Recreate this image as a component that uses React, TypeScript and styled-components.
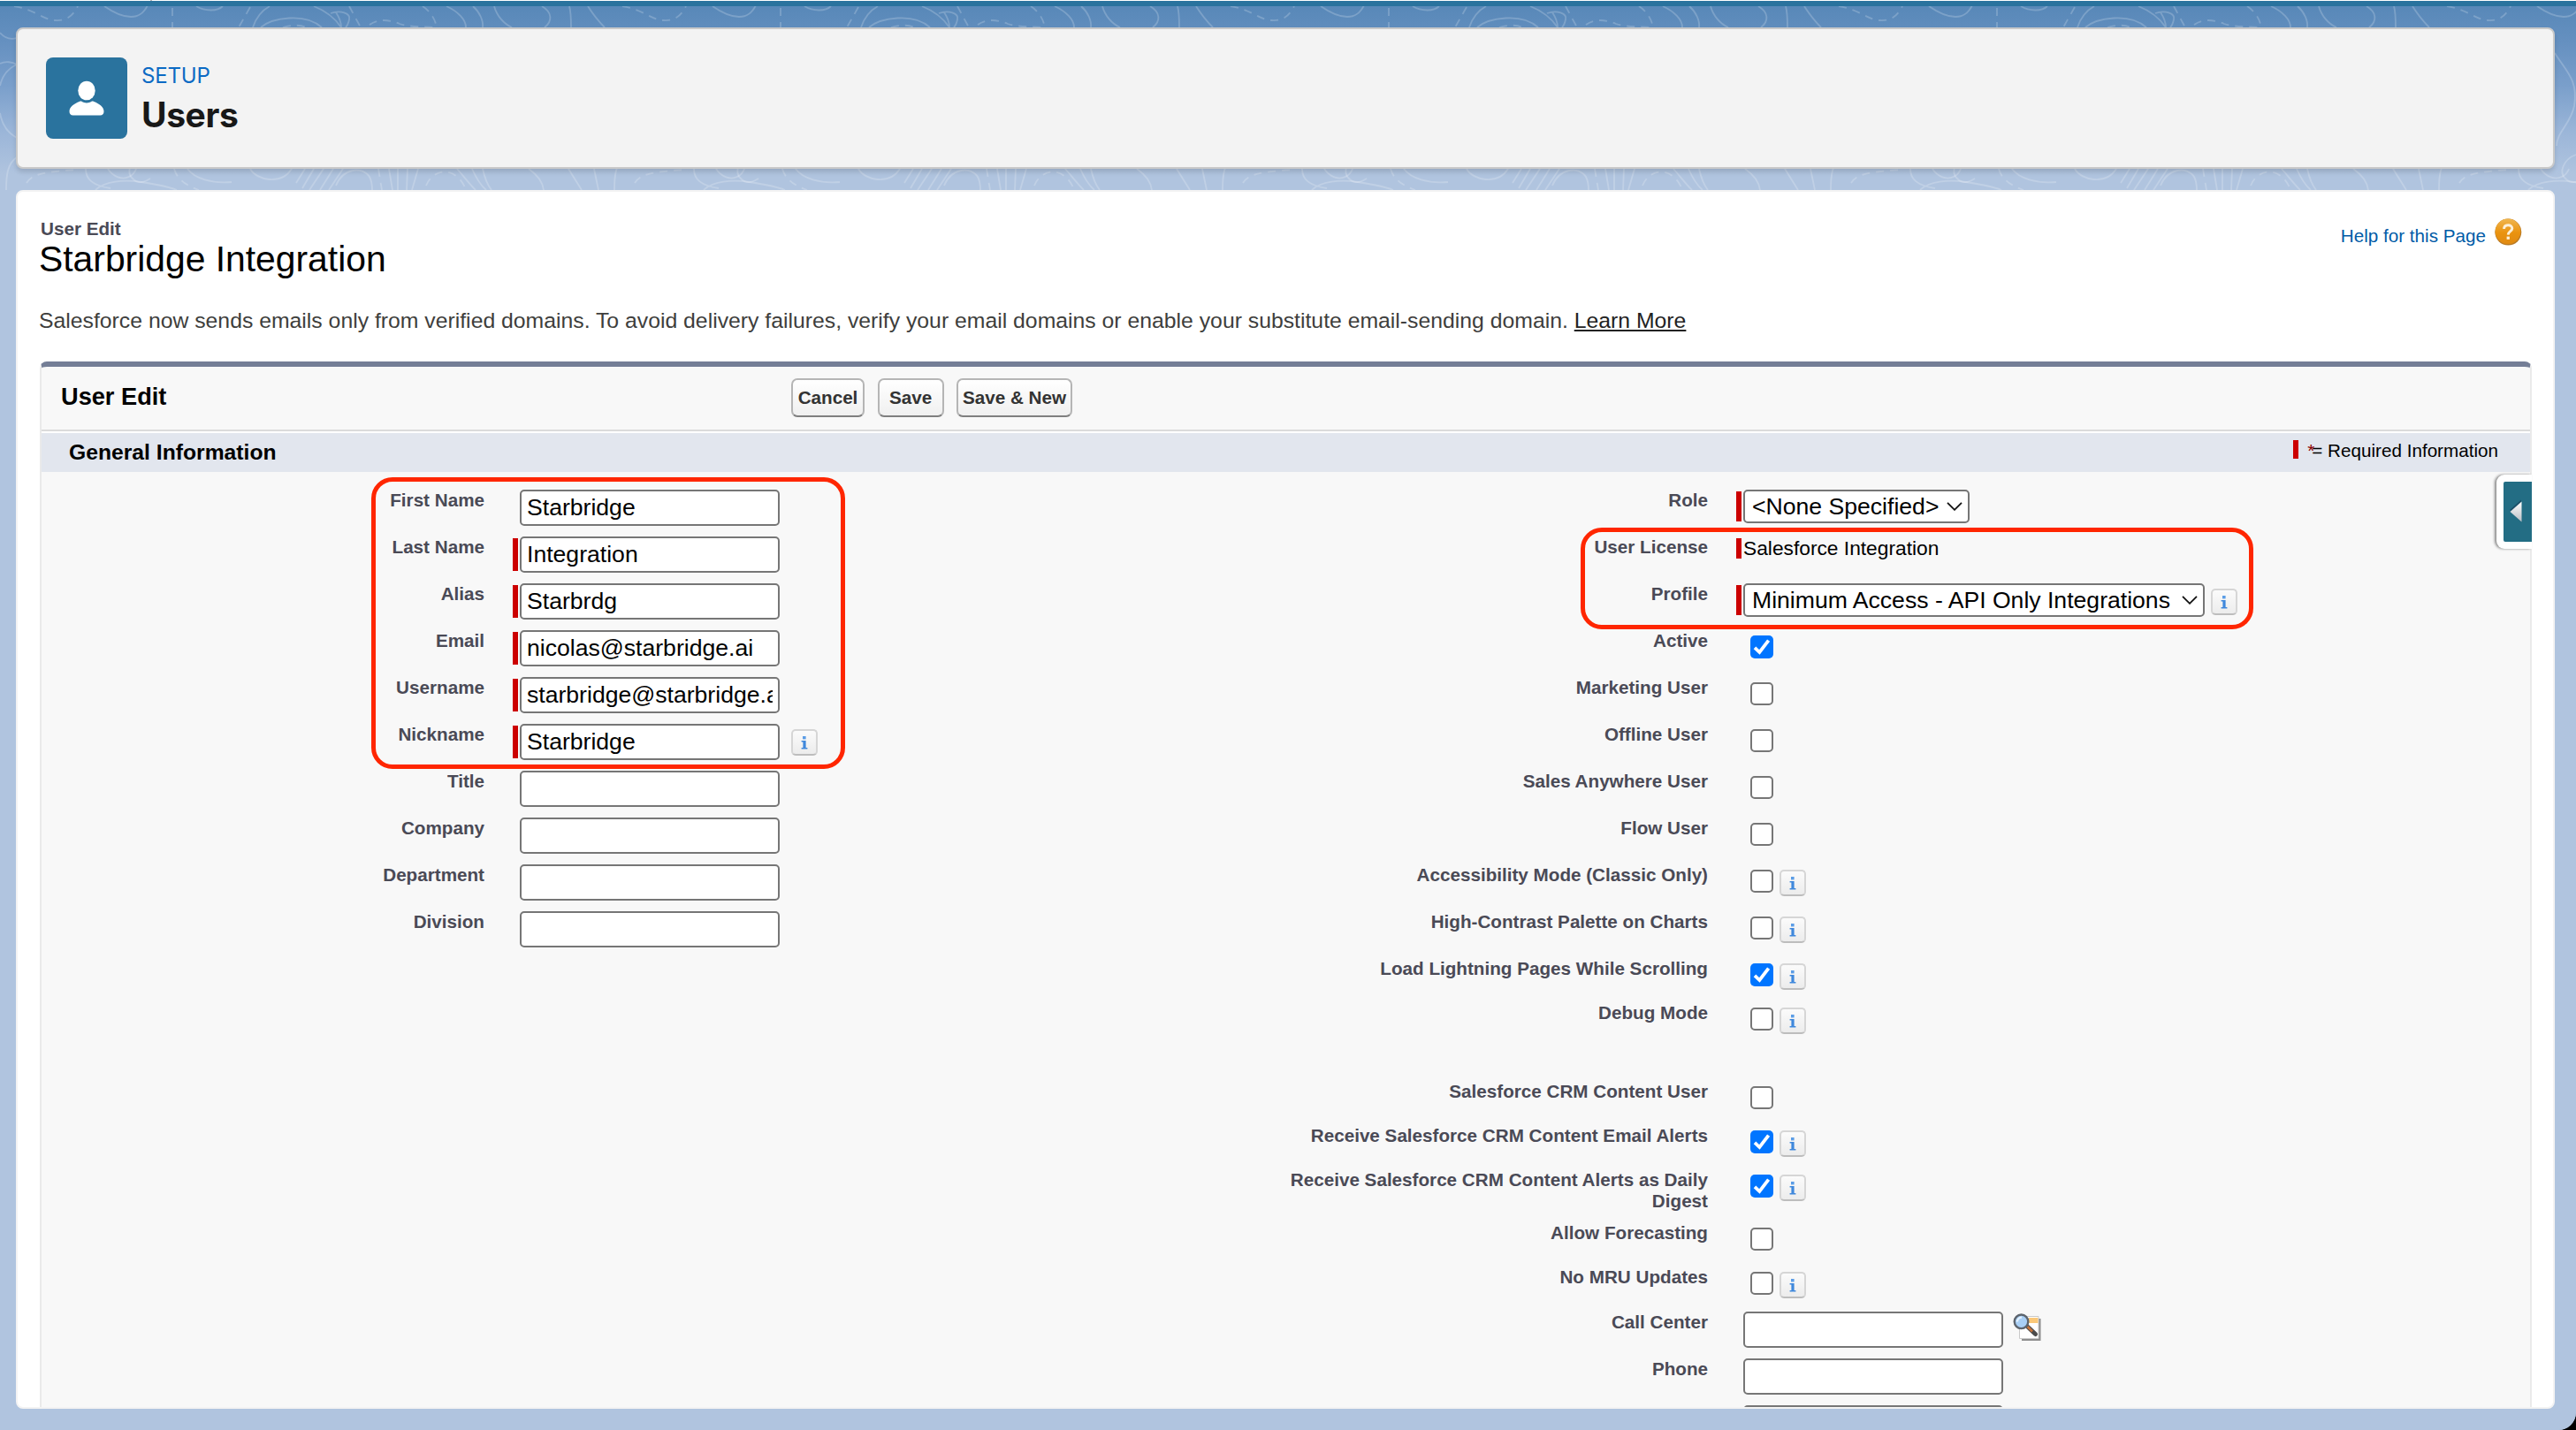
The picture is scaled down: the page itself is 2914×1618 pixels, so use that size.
import React from 'react';
import styled, { createGlobalStyle } from 'styled-components';

interface IField {
  label: string;
  type: 'text' | 'select' | 'checkbox' | 'static';
  value?: string;
  required?: boolean;
  checked?: boolean;
  info?: boolean;
  lookup?: boolean;
  width?: number;
  height?: number;
}

const leftFields: IField[] = [
  { label: 'First Name', type: 'text', value: 'Starbridge' },
  { label: 'Last Name', type: 'text', value: 'Integration', required: true },
  { label: 'Alias', type: 'text', value: 'Starbrdg', required: true },
  { label: 'Email', type: 'text', value: 'nicolas@starbridge.ai', required: true },
  { label: 'Username', type: 'text', value: 'starbridge@starbridge.ai', required: true },
  { label: 'Nickname', type: 'text', value: 'Starbridge', required: true, info: true },
  { label: 'Title', type: 'text' },
  { label: 'Company', type: 'text' },
  { label: 'Department', type: 'text' },
  { label: 'Division', type: 'text' },
];

const rightFields: IField[] = [
  { label: 'Role', type: 'select', value: '<None Specified>', required: true, width: 256 },
  { label: 'User License', type: 'static', value: 'Salesforce Integration', required: true },
  {
    label: 'Profile',
    type: 'select',
    value: 'Minimum Access - API Only Integrations',
    required: true,
    info: true,
    width: 522,
  },
  { label: 'Active', type: 'checkbox', checked: true },
  { label: 'Marketing User', type: 'checkbox' },
  { label: 'Offline User', type: 'checkbox' },
  { label: 'Sales Anywhere User', type: 'checkbox' },
  { label: 'Flow User', type: 'checkbox' },
  { label: 'Accessibility Mode (Classic Only)', type: 'checkbox', info: true },
  { label: 'High-Contrast Palette on Charts', type: 'checkbox', info: true },
  {
    label: 'Load Lightning Pages While Scrolling',
    type: 'checkbox',
    checked: true,
    info: true,
    height: 50,
  },
  { label: 'Debug Mode', type: 'checkbox', info: true, height: 89 },
  { label: 'Salesforce CRM Content User', type: 'checkbox', height: 50 },
  {
    label: 'Receive Salesforce CRM Content Email Alerts',
    type: 'checkbox',
    checked: true,
    info: true,
    height: 50,
  },
  {
    label: 'Receive Salesforce CRM Content Alerts as Daily Digest',
    type: 'checkbox',
    checked: true,
    info: true,
    height: 60,
  },
  { label: 'Allow Forecasting', type: 'checkbox', height: 50 },
  { label: 'No MRU Updates', type: 'checkbox', info: true, height: 51 },
  { label: 'Call Center', type: 'text', lookup: true },
  { label: 'Phone', type: 'text' },
  { label: '', type: 'text' },
];

const barHeights = { text: 37, select: 34, static: 23, checkbox: 0 };

// contour lines of the header background, one 688px wide tile
const Contours = () => (
  <ContourSvg width='100%' height='215'>
    <defs>
      <pattern id='contours' width='688' height='215' patternUnits='userSpaceOnUse'>
        <g fill='none' stroke='#fff' strokeOpacity='0.2' strokeWidth='1.8'>
          <path d='M0 37C5 43 12 45 19 43M118 7C128 14 138 19 148 19C158 19 163 14 167 6M222 7C232 13 246 13 252 7' />
          <path d='M286 31C290 19 296 12 305 7M355 7C370 13 380 22 386 31M295 31C308 20 345 14 364 31M374 15C385 11 397 15 395 22C394 27 393 29 391 31M380 14C384 20 386 26 386 31' />
          <path d='M505 7C518 13 527 22 527 31M535 7C543 14 547 24 546 31M559 7C562 18 570 27 579 31M613 7C625 14 625 24 616 31M644 7C646 14 646 24 646 31M665 7C672 18 678 25 684 31' />
          <path d='M0 72C6 69 14 70 19 73C8 78 2 88 0 97M0 128C2 140 8 150 19 156M19 178C8 185 7 200 7 215' />
          <path d='M138 60C150 80 165 90 160 120C156 140 140 150 140 165M162 175C148 180 142 195 150 202C156 208 162 207 170 202' />
          <path d='M97 191C97 203 105 210 125 213M122 191C128 200 138 204 146 200C150 198 153 194 154 191M108 215C118 205 140 203 160 206C180 209 195 213 200 215' />
          <path d='M212 191C220 202 240 208 262 206M283 191C290 204 318 210 330 191M345 191L335 207M355 191L342 213M366 191L350 215M377 191L362 215M388 191L372 215' />
          <path d='M380 210C388 190 410 188 418 200C421 206 421 212 421 215M440 191L444 215M450 191V215M461 191L460 215M473 191L466 215' />
          <path d='M517 191C525 200 530 207 538 215M534 191C538 200 543 209 550 215M546 191C548 200 552 210 556 215M598 191C608 198 614 206 615 215M643 191L658 215M672 191L677 215' />
          <path
            strokeDasharray='9 7'
            d='M16 7C40 11 48 22 62 23C74 24 82 19 88 7M195 9V31M283 8L270 31M395 7L408 31M418 28C428 21 440 22 452 27C464 31 480 30 490 31M478 7C486 12 491 20 493 27M320 31C330 28 340 28 346 31'
          />
          <path
            strokeDasharray='9 7'
            d='M30 207C36 197 50 194 90 192M197 191C200 202 210 210 225 215M428 191L432 215M482 210C490 190 515 188 526 212'
          />
        </g>
      </pattern>
    </defs>
    <rect width='100%' height='215' fill='url(#contours)' />
  </ContourSvg>
);

const UserIcon = () => (
  <svg width='92' height='92' viewBox='0 0 92 92'>
    <ellipse cx='46' cy='37.5' rx='9.7' ry='10.8' fill='#fff' />
    <path
      d='M38.2 49.7C39 49.3 39.8 49.4 40.4 49.8C43.8 52 48.2 52 51.6 49.8C52.2 49.4 53 49.3 53.8 49.7C60.5 52.4 65.5 56 65.5 61C65.5 63.8 64 65.5 61.3 65.5H30.7C28 65.5 26.5 63.8 26.5 61C26.5 56 31.5 52.4 38.2 49.7Z'
      fill='#fff'
    />
  </svg>
);

const HelpIcon = () => (
  <svg width='31' height='31' viewBox='0 0 31 31'>
    <defs>
      <linearGradient id='help' x1='0' y1='0' x2='0' y2='1'>
        <stop offset='0' stopColor='#f0b650' />
        <stop offset='0.55' stopColor='#ea930f' />
        <stop offset='1' stopColor='#e08a12' />
      </linearGradient>
    </defs>
    <circle cx='15.3' cy='15.6' r='15' fill='#b87a24' />
    <circle cx='15' cy='14.8' r='14.3' fill='url(#help)' />
    <path
      d='M10.6 12C10.6 9 12.6 7.8 15.2 7.8C18 7.8 19.8 9.4 19.8 11.6C19.8 14.6 15.4 14.8 15.2 18.6'
      fill='none'
      stroke='#fdf0d8'
      strokeWidth='2.9'
    />
    <rect x='13.6' y='20.6' width='3.3' height='3.3' fill='#fdf0d8' />
  </svg>
);

const InfoIcon = () => (
  <InfoBox>
    <svg width='8' height='15' viewBox='0 0 8 15'>
      <rect x='2' y='0' width='3.6' height='3.4' fill='#5b9de6' />
      <path d='M0.6 5H5.6V13H7.4V14.6H0.6V13H2.4V6.6H0.6Z' fill='#3f88dc' />
    </svg>
  </InfoBox>
);

const LookupIcon = () => (
  <LookupSvg width='34' height='32' viewBox='0 0 34 32'>
    <path d='M10 6H31.5V31H10Z' fill='#8e8e8e' />
    <path d='M7.5 3.5H29V28.5H7.5Z' fill='#fff' stroke='#c9c9c9' />
    <rect x='18' y='5' width='10.5' height='6' fill='#fbc878' />
    <path d='M17 15.5L25.5 23.5' stroke='#4c4c4c' strokeWidth='5' strokeLinecap='round' />
    <path d='M16.5 15L22 20.5' stroke='#c8733a' strokeWidth='2.6' />
    <circle cx='9.5' cy='9.3' r='7.8' fill='#a9cff5' stroke='#5d646d' strokeWidth='2.4' />
    <path d='M5 9.5C5 6.5 7 4.6 10 4.6' fill='none' stroke='#e4f2ff' strokeWidth='2.2' />
  </LookupSvg>
);

const Checkbox = ({ checked }: { checked?: boolean }) => (
  <CheckboxBox role='checkbox' aria-checked={!!checked} $checked={checked}>
    {checked && (
      <svg width='26' height='26' viewBox='0 0 26 26'>
        <path d='M5 13.8L10.4 19L20.6 5.6' fill='none' stroke='#fff' strokeWidth='3.8' />
      </svg>
    )}
  </CheckboxBox>
);

const FieldRow = ({ field }: { field: IField }) => {
  const { label, type, value, required, checked, info, lookup, width, height } = field;

  return (
    <Row $height={height}>
      <Label>{label}</Label>
      <RequiredBar $on={required} $height={barHeights[type]} />
      {type === 'text' && <TextInput type='text' defaultValue={value} />}
      {type === 'static' && <StaticText>{value}</StaticText>}
      {type === 'checkbox' && <Checkbox checked={checked} />}
      {type === 'select' && (
        <SelectBox $width={width}>
          {value}
          <svg width='18' height='10' viewBox='0 0 18 10'>
            <path d='M1 0.8L9 8.8L17 0.8' fill='none' stroke='#111' strokeWidth='1.8' />
          </svg>
        </SelectBox>
      )}
      {info && (
        <InfoCont $wide={type === 'text'}>
          <InfoIcon />
        </InfoCont>
      )}
      {lookup && <LookupIcon />}
    </Row>
  );
};

const App = () => {
  return (
    <>
      <GlobalStyle />
      <Page>
        <TabStrip />
        <BrandBar />
        <Content>
          <Contours />
          <PageHeader>
            <HeaderIcon>
              <UserIcon />
            </HeaderIcon>
            <HeaderText>
              <Setup>SETUP</Setup>
              <HeaderTitle>Users</HeaderTitle>
            </HeaderText>
          </PageHeader>
          <Card>
            <TitleCont>
              <div>
                <PageType>User Edit</PageType>
                <PageDescription>Starbridge Integration</PageDescription>
              </div>
              <HelpLink>
                <span>Help for this Page</span>
                <HelpIcon />
              </HelpLink>
            </TitleCont>
            <Message>
              Salesforce now sends emails only from verified domains. To avoid delivery failures,
              verify your email domains or enable your substitute email-sending domain.{' '}
              <LearnMore>Learn More</LearnMore>
            </Message>
            <Block>
              <BlockHeader>
                <BlockTitle>User Edit</BlockTitle>
                <Button $width={83}>Cancel</Button>
                <Button $width={75}>Save</Button>
                <Button $width={131}>Save &amp; New</Button>
              </BlockHeader>
              <SectionBar>
                <SectionTitle>General Information</SectionTitle>
                <Legend>
                  <LegendBar />
                  <Asterisk>*</Asterisk>= Required Information
                </Legend>
              </SectionBar>
              <BlockBody>
                <LeftColumn>
                  {leftFields.map((field) => (
                    <FieldRow key={field.label} field={field} />
                  ))}
                </LeftColumn>
                <RightColumn>
                  {rightFields.map((field) => (
                    <FieldRow key={field.label} field={field} />
                  ))}
                </RightColumn>
                <NameHighlight />
                <ProfileHighlight />
                <SideTab>
                  <SideTabButton>
                    <svg width='18' height='28' viewBox='0 0 18 28'>
                      <defs>
                        <linearGradient id='arrow' x1='0' y1='0' x2='0' y2='1'>
                          <stop offset='0' stopColor='#fff' />
                          <stop offset='1' stopColor='#b9bec4' />
                        </linearGradient>
                      </defs>
                      <path d='M14 0.5L1 12L14 23Z' fill='#1a4f68' />
                      <path d='M14.5 2.5L1.5 14L14.5 25.5Z' fill='url(#arrow)' />
                    </svg>
                  </SideTabButton>
                </SideTab>
              </BlockBody>
            </Block>
          </Card>
        </Content>
      </Page>
    </>
  );
};

export default App;

const GlobalStyle = createGlobalStyle`
  * {
    box-sizing: border-box;
  }
  body {
    margin: 0;
    background: #000;
    font-family: 'Liberation Sans', Arial, sans-serif;
  }
  svg {
    display: block;
  }
`;

const Page = styled.div`
  display: flex;
  flex-direction: column;
  height: 100vh;
  overflow: hidden;
  background: #b0c4df;
  border-bottom-right-radius: 20px;
`;

const TabStrip = styled.div`
  flex: none;
  height: 1px;
  background: linear-gradient(90deg, #fff 170px, #b5b5b5 170px, #b5b5b5 172px, #fff 172px);
`;

const BrandBar = styled.div`
  flex: none;
  height: 6px;
  background: #2a739e;
`;

const Content = styled.div`
  position: relative;
  flex: 1;
  min-height: 0;
  display: flex;
  flex-direction: column;
  gap: 24px;
  padding: 24px 24px 24px 18px;
  background: linear-gradient(
    180deg,
    #5888b8 0,
    #6590c0 40px,
    #7a9fcb 90px,
    #9ab5d8 140px,
    #b0c4df 190px
  );
`;

const ContourSvg = styled.svg`
  position: absolute;
  top: -7px;
  left: 0;
  clip-path: inset(7px 0 0 0);
`;

const PageHeader = styled.header`
  position: relative;
  flex: none;
  display: flex;
  gap: 16px;
  height: 160px;
  padding: 32px;
  background: #f3f3f3;
  border: 2px solid #c9c9c9;
  border-radius: 8px;
  box-shadow: 0 4px 5px rgba(0, 0, 0, 0.12);
`;

const HeaderIcon = styled.div`
  width: 92px;
  height: 92px;
  background: #2a739e;
  border-radius: 8px;
`;

const HeaderText = styled.div`
  padding-top: 6px;
  font-family: Inter, sans-serif;
`;

const Setup = styled.div`
  font-size: 24px;
  line-height: 30px;
  letter-spacing: -0.2px;
  color: #0b6ac4;
`;

const HeaderTitle = styled.h1`
  margin: 6px 0 0;
  font-size: 39px;
  line-height: 46px;
  font-weight: 700;
  letter-spacing: -0.4px;
  color: #181818;
`;

const Card = styled.main`
  position: relative;
  flex: 1;
  min-height: 0;
  display: flex;
  flex-direction: column;
  padding: 30px 24px 0 25px;
  background: #fff;
  border: 2px solid #f3f3f3;
  border-radius: 8px;
  overflow: hidden;
`;

const TitleCont = styled.div`
  flex: none;
  display: flex;
  justify-content: space-between;
`;

const PageType = styled.div`
  margin-left: 1px;
  font-size: 20.67px;
  line-height: 24px;
  font-weight: 700;
  color: #4a4a56;
`;

const PageDescription = styled.h2`
  margin: 1px 0 0 -1px;
  font-size: 40.85px;
  line-height: 42px;
  font-weight: 400;
  color: #000;
`;

const HelpLink = styled.a`
  display: flex;
  gap: 10px;
  padding-right: 11px;
  font-size: 20.67px;
  line-height: 24px;
  color: #015ba7;

  span {
    margin-top: 8px;
  }
`;

const Message = styled.p`
  flex: none;
  margin: 34px 0 31px -1px;
  font-size: 24.78px;
  line-height: 30px;
  color: #3e3e3c;
`;

const LearnMore = styled.a`
  color: #222;
  text-decoration: underline;
`;

const Block = styled.section`
  flex: 1;
  min-height: 0;
  display: flex;
  flex-direction: column;
  background: #f8f8f8;
  border: 2px solid #eaeaea;
  border-top: 6px solid #747e96;
  border-bottom: none;
  border-radius: 8px 8px 0 0;
`;

const BlockHeader = styled.div`
  flex: none;
  display: flex;
  align-items: flex-start;
  height: 73px;
  padding: 13px 0 0 22px;
  border-bottom: 2px solid #dbdbdb;
`;

const BlockTitle = styled.h2`
  width: 826px;
  margin: 6px 0 0;
  font-size: 27.2px;
  line-height: 30px;
  font-weight: 700;
`;

const Button = styled.button<{ $width: number }>`
  width: ${({ $width }) => $width}px;
  height: 44px;
  margin-right: 14.5px;
  padding: 0;
  font: 700 20.67px 'Liberation Sans', Arial, sans-serif;
  color: #333;
  white-space: nowrap;
  background: linear-gradient(180deg, #fff, #f0f0f0);
  border: 2px solid #b5b5b5;
  border-bottom-color: #7f7f7f;
  border-radius: 7px;
`;

const SectionBar = styled.div`
  flex: none;
  display: flex;
  justify-content: space-between;
  height: 46px;
  padding: 0 36px 0 31px;
  background: #e2e6ee;
  border-top: 2px solid #fff;
`;

const SectionTitle = styled.h3`
  margin: 0;
  font-size: 24.7px;
  line-height: 44px;
  font-weight: 700;
`;

const Legend = styled.div`
  display: flex;
  padding-top: 8px;
  font-size: 20.67px;
  line-height: 24px;
`;

const LegendBar = styled.span`
  width: 6px;
  height: 21px;
  margin-right: 10px;
  background: #c00;
`;

const Asterisk = styled.span`
  margin-right: -3px;
  color: #8c0000;
`;

const BlockBody = styled.div`
  position: relative;
  flex: 1;
  min-height: 0;
  display: flex;
  padding-top: 20px;
`;

const LeftColumn = styled.div`
  width: 1405px;
`;

const RightColumn = styled.div`
  flex: 1;
`;

const Row = styled.div<{ $height?: number }>`
  display: flex;
  align-items: flex-start;
  height: ${({ $height }) => $height || 53}px;
`;

const Label = styled.label`
  width: 501px;
  padding-left: 20px;
  font-size: 20.67px;
  line-height: 24px;
  font-weight: 700;
  text-align: right;
  color: #4a4a56;

  ${RightColumn} & {
    width: 480px;
    padding-left: 0;
  }
`;

const RequiredBar = styled.span<{ $on?: boolean; $height: number }>`
  flex: none;
  width: 6px;
  height: ${({ $height }) => $height}px;
  margin: 2px 2px 0 32px;
  background: ${({ $on }) => ($on ? '#c00' : 'transparent')};
`;

const TextInput = styled.input`
  width: 294px;
  height: 41px;
  padding: 0 6px 1px 6px;
  font: 26.6px 'Liberation Sans', Arial, sans-serif;
  color: #000;
  background: #fff;
  border: 2px solid #767676;
  border-radius: 5px;
`;

const StaticText = styled.span`
  font-size: 22.75px;
  line-height: 26px;
`;

const SelectBox = styled.div<{ $width?: number }>`
  display: flex;
  justify-content: space-between;
  align-items: center;
  width: ${({ $width }) => $width}px;
  height: 38px;
  padding: 0 6px 0 8px;
  font-size: 26.6px;
  white-space: nowrap;
  background: #fff;
  border: 2px solid #767676;
  border-radius: 5px;
`;

const CheckboxBox = styled.span<{ $checked?: boolean }>`
  width: 26px;
  height: 26px;
  margin: 6px 0 0 8px;
  background: ${({ $checked }) => ($checked ? '#0075ff' : '#fff')};
  border: ${({ $checked }) => ($checked ? 'none' : '2px solid #767676')};
  border-radius: 5px;
`;

const InfoCont = styled.span<{ $wide: boolean }>`
  margin: 6px 0 0 ${({ $wide }) => ($wide ? 13 : 7)}px;
`;

const InfoBox = styled.span`
  display: flex;
  justify-content: center;
  align-items: center;
  width: 30px;
  height: 30px;
  background: linear-gradient(180deg, #fbfbfb, #ececec);
  border: 2px solid #d6d6d6;
  border-bottom-color: #bdbdbd;
  border-radius: 5px;
`;

const LookupSvg = styled.svg`
  margin: 2px 0 0 11px;
`;

const Highlight = styled.div`
  position: absolute;
  border: 5px solid #ff2600;
  border-radius: 24px;
`;

const NameHighlight = styled(Highlight)`
  top: 6px;
  left: 373px;
  width: 536px;
  height: 330px;
`;

const ProfileHighlight = styled(Highlight)`
  top: 63px;
  left: 1741px;
  width: 761px;
  height: 115px;
`;

const SideTab = styled.div`
  position: absolute;
  top: 3px;
  right: -2px;
  width: 40px;
  height: 84px;
  padding: 8px 0 8px 8px;
  background: #fff;
  border-radius: 9px 0 0 9px;
  box-shadow: -2px 0 3px rgba(0, 0, 0, 0.45);
`;

const SideTabButton = styled.div`
  height: 100%;
  padding: 20px 0 0 6px;
  background: #236d84;
  border-radius: 2px 0 0 2px;
`;
